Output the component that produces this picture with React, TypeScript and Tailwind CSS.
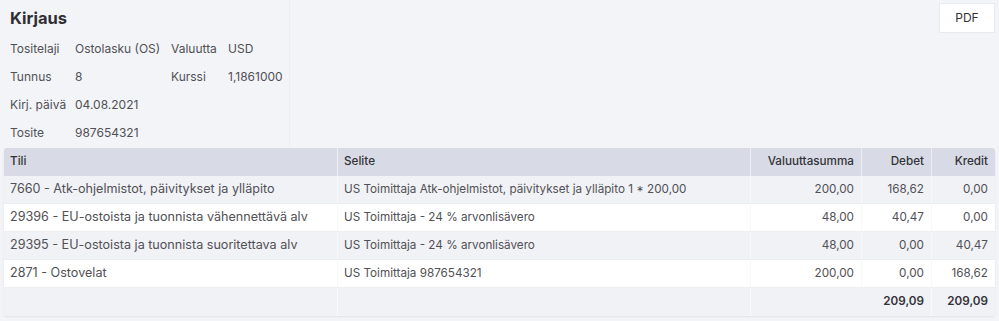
import React from "react";

const rows = [
  {
    tili: "7660 - Atk-ohjelmistot, päivitykset ja ylläpito",
    selite: "US Toimittaja Atk-ohjelmistot, päivitykset ja ylläpito 1 * 200,00",
    summa: "200,00",
    debet: "168,62",
    kredit: "0,00",
  },
  {
    tili: "29396 - EU-ostoista ja tuonnista vähennettävä alv",
    selite: "US Toimittaja - 24 % arvonlisävero",
    summa: "48,00",
    debet: "40,47",
    kredit: "0,00",
  },
  {
    tili: "29395 - EU-ostoista ja tuonnista suoritettava alv",
    selite: "US Toimittaja - 24 % arvonlisävero",
    summa: "48,00",
    debet: "0,00",
    kredit: "40,47",
  },
  {
    tili: "2871 - Ostovelat",
    selite: "US Toimittaja 987654321",
    summa: "200,00",
    debet: "0,00",
    kredit: "168,62",
  },
];

const cols = "grid grid-cols-[334px_413px_111px_70px_63px]";

export default function App() {
  return (
    <div
      className="w-[999px] h-[321px] overflow-hidden bg-[#f3f4f8] text-[#505055] text-[11.7px]"
      style={{ fontFamily: "Inter, 'Liberation Sans', sans-serif" }}
    >
      <div className="flex justify-between">
        <div className="w-[289px] h-[147px] pl-[10px] pt-[8px] shadow-[1px_0_0_#eceef3] text-[12px]">
          <h2 className="text-[16.5px] leading-[20px] font-bold text-[#2f2f33]">Kirjaus</h2>
          <div className="mt-[7px] grid grid-cols-[65px_96px_57px_1fr] auto-rows-[28px] items-center">
            <span>Tositelaji</span>
            <span>Ostolasku (OS)</span>
            <span>Valuutta</span>
            <span>USD</span>
            <span>Tunnus</span>
            <span>8</span>
            <span>Kurssi</span>
            <span>1,1861000</span>
            <span>Kirj. päivä</span>
            <span>04.08.2021</span>
            <span></span>
            <span></span>
            <span>Tosite</span>
            <span>987654321</span>
          </div>
        </div>
        <button className="mt-[3px] mr-[4px] h-[30px] w-[56px] bg-white border border-[#e8eaef] text-[12px] text-[#333]">
          PDF
        </button>
      </div>

      <div className="ml-[4px] mt-[1px] w-[991px] rounded-[3px] overflow-hidden shadow-[0_1px_2px_rgba(0,0,0,0.08)]">
        <div className={`${cols} h-[28px] bg-[#d8dbe5] font-medium text-[#333338]`}>
          <div className="flex items-center px-[6px] border-r border-[#eceef3]">Tili</div>
          <div className="flex items-center px-[6px] border-r border-[#eceef3]">Selite</div>
          <div className="flex items-center justify-end px-[7px] border-r border-[#eceef3]">Valuuttasumma</div>
          <div className="flex items-center justify-end px-[7px] border-r border-[#eceef3]">Debet</div>
          <div className="flex items-center justify-end px-[7px]">Kredit</div>
        </div>
        {rows.map((r, i) => (
          <div
            key={i}
            className={`${cols} h-[28px] ${i % 2 === 0 ? "bg-[#f1f2f6]" : "bg-white"} border-b border-[#eceef2]`}
          >
            <div className="flex items-center px-[6px] border-r border-[#f7f8fa] whitespace-nowrap text-[12.6px]">{r.tili}</div>
            <div className="flex items-center px-[6px] border-r border-[#f7f8fa] whitespace-nowrap">{r.selite}</div>
            <div className="flex items-center justify-end px-[7px] border-r border-[#f7f8fa]">{r.summa}</div>
            <div className="flex items-center justify-end px-[7px] border-r border-[#f7f8fa]">{r.debet}</div>
            <div className="flex items-center justify-end px-[7px]">{r.kredit}</div>
          </div>
        ))}
        <div className="grid grid-cols-[334px_413px_181px_63px] h-[28px] bg-[#f1f2f6] font-semibold text-[#333338]">
          <div className="border-r border-[#f9fafb]"></div>
          <div className="border-r border-[#f9fafb]"></div>
          <div className="flex items-center justify-end px-[7px] border-r border-[#f9fafb]">209,09</div>
          <div className="flex items-center justify-end px-[7px]">209,09</div>
        </div>
      </div>
    </div>
  );
}
